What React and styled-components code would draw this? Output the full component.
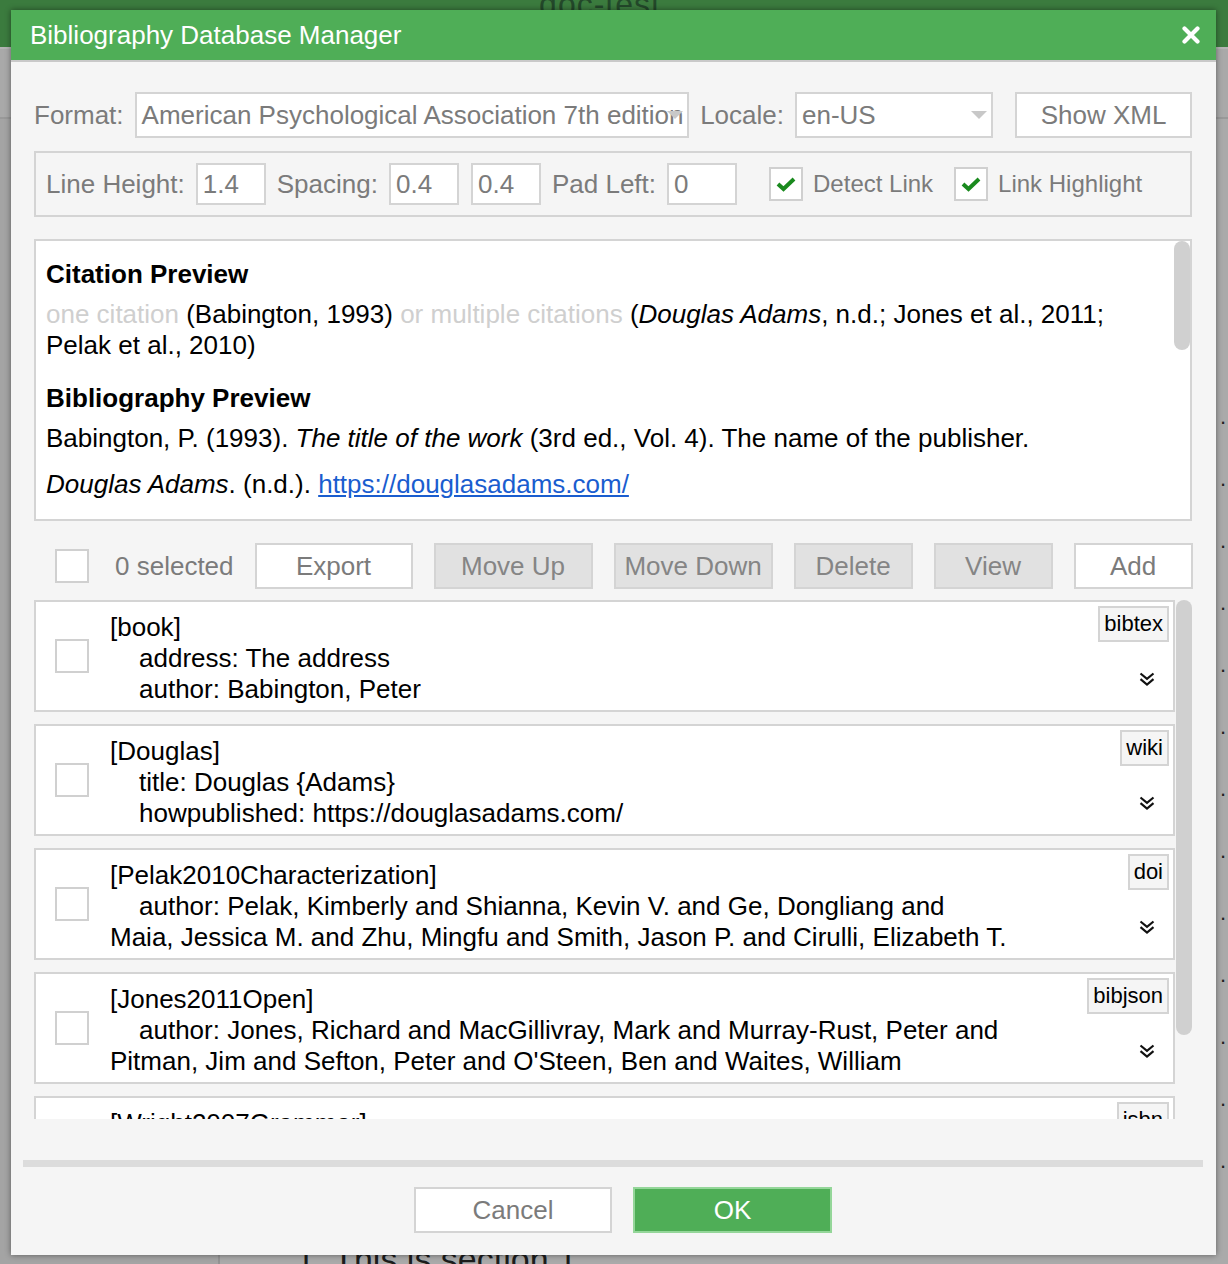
import React from 'react'
import styled, { createGlobalStyle, css } from 'styled-components'

const GlobalStyle = createGlobalStyle`
  html, body {
    margin: 0;
    padding: 0;
  }
  body {
    font-family: "Liberation Sans", Arial, Helvetica, sans-serif;
    background: #a6a6a6;
  }
  * {
    box-sizing: border-box;
  }
`

const entries = [
	{
		key: 'book',
		badge: 'bibtex',
		fields: ['address: The address', 'author: Babington, Peter'],
	},
	{
		key: 'Douglas',
		badge: 'wiki',
		fields: ['title: Douglas {Adams}', 'howpublished: https://douglasadams.com/'],
	},
	{
		key: 'Pelak2010Characterization',
		badge: 'doi',
		fields: [
			[
				'author: Pelak, Kimberly and Shianna, Kevin V. and Ge, Dongliang and',
				'Maia, Jessica M. and Zhu, Mingfu and Smith, Jason P. and Cirulli, Elizabeth T.',
			],
		],
	},
	{
		key: 'Jones2011Open',
		badge: 'bibjson',
		fields: [
			[
				'author: Jones, Richard and MacGillivray, Mark and Murray-Rust, Peter and',
				"Pitman, Jim and Sefton, Peter and O'Steen, Ben and Waites, William",
			],
		],
	},
	{
		key: 'Wright2007Grammar',
		badge: 'isbn',
		fields: ['author: Wright, Stephen', 'title: Grammar'],
	},
]

export default function App() {
	return (
		<Page>
			<GlobalStyle />
			<AppBar>
				<AppTitle>doc-test</AppTitle>
			</AppBar>
			<AppToolbar />
			<Workspace>
				<Sidebar />
				<Document>
					<Toc>
						{Array.from({ length: 13 }).map((_, i) => (
							<TocRow key={i}>. . .</TocRow>
						))}
					</Toc>
					<DocHeading>1. This is section 1</DocHeading>
				</Document>
			</Workspace>

			<Modal>
				<TitleBar>
					<span>Bibliography Database Manager</span>
					<CloseButton aria-label='close'>
						<svg width='18' height='18' viewBox='0 0 18 18'>
							<path
								d='M2.5 2.5 L15.5 15.5 M15.5 2.5 L2.5 15.5'
								stroke='#fff'
								strokeWidth='4.2'
								strokeLinecap='round'
							/>
						</svg>
					</CloseButton>
				</TitleBar>

				<Body>
					<FormatRow>
						<Label>Format:</Label>
						<Select grow>
							<SelectText>American Psychological Association 7th edition</SelectText>
							<Arrow />
						</Select>
						<Label lead>Locale:</Label>
						<Select width={198}>
							<SelectText>en-US</SelectText>
							<Arrow />
						</Select>
						<Button wide={177} spaced>
							Show XML
						</Button>
					</FormatRow>

					<OptionsBox>
						<Label>Line Height:</Label>
						<Input defaultValue='1.4' />
						<Label lead>Spacing:</Label>
						<Input defaultValue='0.4' />
						<Input defaultValue='0.4' />
						<Label lead>Pad Left:</Label>
						<Input defaultValue='0' />
						<Check checked gap={32} />
						<CheckLabel>Detect Link</CheckLabel>
						<Check checked gap={10} />
						<CheckLabel>Link Highlight</CheckLabel>
					</OptionsBox>

					<Preview>
						<PreviewContent>
							<PreviewTitle>Citation Preview</PreviewTitle>
							<CitationText>
								<Muted>one citation</Muted> (Babington, 1993){' '}
								<Muted>or multiple citations</Muted> (<i>Douglas Adams</i>, n.d.;
								Jones et al., 2011; Pelak et al., 2010)
							</CitationText>
							<PreviewTitle>Bibliography Preview</PreviewTitle>
							<BibEntry>
								Babington, P. (1993). <i>The title of the work</i> (3rd ed., Vol.
								4). The name of the publisher.
							</BibEntry>
							<BibEntry>
								<i>Douglas Adams</i>. (n.d.).{' '}
								<Link href='#'>https://douglasadams.com/</Link>
							</BibEntry>
							<BibEntry>
								Jones, R., MacGillivray, M., Murray-Rust, P., Pitman, J., Sefton,
								P., O’Steen, B., &amp; Waites, W. (2011). Open Bibliography for
								Science, Technology, and Medicine.{' '}
								<i>Journal of Cheminformatics</i>, <i>3</i>(1), 47.
							</BibEntry>
						</PreviewContent>
						<Track>
							<Thumb size={109} />
						</Track>
					</Preview>

					<Toolbar>
						<Check />
						<Count>0 selected</Count>
						<Button wide={158}>Export</Button>
						<Button wide={159} disabled>
							Move Up
						</Button>
						<Button wide={159} disabled>
							Move Down
						</Button>
						<Button wide={119} disabled>
							Delete
						</Button>
						<Button wide={119} disabled>
							View
						</Button>
						<Button wide={119}>Add</Button>
					</Toolbar>

					<ListArea>
						<EntryList>
							{entries.map((entry) => (
								<Entry key={entry.key}>
									<EntryCheck>
										<Check />
									</EntryCheck>
									<EntryText>
										<div>[{entry.key}]</div>
										{entry.fields.map((field, i) => (
											<Field key={i}>
												{Array.isArray(field) ? (
													<>
														{field[0]}
														<br />
														{field[1]}
													</>
												) : (
													field
												)}
											</Field>
										))}
									</EntryText>
									<EntrySide>
										<Badge>{entry.badge}</Badge>
										<Expand>
											<svg width='16' height='14' viewBox='0 0 16 14'>
												<path
													d='M1.5 1.5 L8 6.8 L14.5 1.5 M1.5 7.2 L8 12.5 L14.5 7.2'
													fill='none'
													stroke='#111'
													strokeWidth='2.2'
												/>
											</svg>
										</Expand>
									</EntrySide>
								</Entry>
							))}
						</EntryList>
						<Track>
							<Thumb size={435} />
						</Track>
					</ListArea>

					<Footer>
						<Button wide={198}>Cancel</Button>
						<Button wide={199} primary>
							OK
						</Button>
					</Footer>
				</Body>
			</Modal>
		</Page>
	)
}

function Check({ checked, gap }) {
	return (
		<CheckBox gap={gap}>
			{checked && (
				<svg width='22' height='16' viewBox='0 0 22 16'>
					<path
						d='M3 8 L8.5 13 L19 3'
						fill='none'
						stroke='#1a8a1e'
						strokeWidth='4'
					/>
				</svg>
			)}
		</CheckBox>
	)
}

/* ---------- background app ---------- */

const Page = styled.div`
	position: relative;
	width: 1228px;
	height: 1264px;
	overflow: hidden;
	background: #a6a6a6;
	display: flex;
	flex-direction: column;
`
const AppBar = styled.header`
	height: 47px;
	flex: none;
	background: #3b7b3e;
	display: flex;
	justify-content: center;
	padding-right: 28px;
	overflow: hidden;
`
const AppTitle = styled.div`
	margin-top: -14px;
	font-size: 32px;
	letter-spacing: 1px;
	color: #23482a;
`
const AppToolbar = styled.div`
	height: 72px;
	flex: none;
	background: #a9a9a9;
	border-top: 2px solid #b4b4b4;
	border-bottom: 2px solid #999;
`
const Workspace = styled.div`
	flex: 1;
	display: flex;
`
const Sidebar = styled.div`
	width: 220px;
	background: #a4a4a4;
	border-right: 2px solid #939393;
`
const Document = styled.div`
	flex: 1;
	background: #aaaaaa;
	display: flex;
	flex-direction: column;
	justify-content: space-between;
	padding: 285px 0 0 76px;
	overflow: hidden;
`
const Toc = styled.div`
	display: flex;
	flex-direction: column;
`
const TocRow = styled.div`
	height: 62px;
	text-align: right;
	font-size: 22px;
	letter-spacing: 2px;
	color: #222;
`
const DocHeading = styled.div`
	font-size: 34px;
	color: #1c1c1c;
	margin-bottom: -15px;
`

/* ---------- dialog ---------- */

const Modal = styled.div`
	position: absolute;
	top: 10px;
	left: 11px;
	width: 1205px;
	height: 1245px;
	background: #f5f5f5;
	box-shadow: 0 0 6px rgba(0, 0, 0, 0.45);
	display: flex;
	flex-direction: column;
	font-size: 26px;
`
const TitleBar = styled.div`
	height: 52px;
	flex: none;
	background: #4fae57;
	border-bottom: 2px solid #c9c9c9;
	display: flex;
	align-items: center;
	justify-content: space-between;
	padding: 0 16px 0 19px;
	color: #fff;
	font-size: 26px;
`
const CloseButton = styled.div`
	display: flex;
	width: 18px;
	height: 18px;
`
const Body = styled.div`
	flex: 1;
	display: flex;
	flex-direction: column;
	padding: 30px 24px 0 23px;
`
const Label = styled.span`
	font-size: 26px;
	color: #7b7b7b;
	white-space: nowrap;
	margin-left: ${(p) => (p.lead ? '11px' : '0')};
	margin-right: 11px;
`
const CheckLabel = styled.span`
	font-size: 24px;
	color: #7b7b7b;
	white-space: nowrap;
	margin-right: 11px;
`
const FormatRow = styled.div`
	height: 46px;
	display: flex;
	align-items: center;
	margin-bottom: 13px;
`
const Select = styled.div`
	position: relative;
	height: 46px;
	background: #fff;
	border: 2px solid #d4d4d4;
	display: flex;
	align-items: center;
	padding: 0 0 0 5px;
	overflow: hidden;
	${(p) =>
		p.grow
			? css`
					flex: 1;
					min-width: 0;
			  `
			: css`
					width: ${p.width}px;
					flex: none;
			  `}
`
const SelectText = styled.span`
	font-size: 26px;
	color: #7b7b7b;
	white-space: nowrap;
`
const Arrow = styled.span`
	position: absolute;
	right: 4px;
	top: 17px;
	width: 0;
	height: 0;
	border-left: 8px solid transparent;
	border-right: 8px solid transparent;
	border-top: 8px solid #c8c8c8;
`
const Button = styled.button`
	flex: none;
	width: ${(p) => p.wide}px;
	height: 46px;
	margin-left: ${(p) => (p.spaced ? '22px' : '0')};
	font-family: inherit;
	font-size: 26px;
	color: #7b7b7b;
	background: #fff;
	border: 2px solid #d4d4d4;
	padding: 0;
	cursor: pointer;

	&:disabled {
		background: #e1e1e1;
		color: #858585;
		cursor: default;
	}

	${(p) =>
		p.primary &&
		css`
			background: #4fae57;
			border-color: #94d699;
			color: #fff;
		`}
`
const OptionsBox = styled.div`
	height: 66px;
	border: 2px solid #d4d4d4;
	display: flex;
	align-items: center;
	padding: 0 10px;
	margin-bottom: 22px;
`
const Input = styled.input`
	width: 70px;
	height: 42px;
	flex: none;
	border: 2px solid #d4d4d4;
	background: #fff;
	font-family: inherit;
	font-size: 26px;
	color: #7b7b7b;
	padding: 0 5px;
	outline: none;

	& + & {
		margin-left: 12px;
	}
`
const CheckBox = styled.span`
	width: 34px;
	height: 34px;
	flex: none;
	display: flex;
	align-items: center;
	justify-content: center;
	background: #fff;
	border: 2px solid #d0d0d0;
	margin-left: ${(p) => (p.gap ? p.gap : 0)}px;
	margin-right: ${(p) => (p.gap ? 10 : 0)}px;
`
const Track = styled.div`
	width: 16px;
	flex: none;
`
const Thumb = styled.div`
	height: ${(p) => p.size}px;
	background: #d0d0d0;
	border-radius: 8px;
`
const Preview = styled.div`
	height: 282px;
	flex: none;
	display: flex;
	border: 2px solid #d4d4d4;
	background: #fff;
	margin-bottom: 22px;
	overflow: hidden;
`
const PreviewContent = styled.div`
	flex: 1;
	min-width: 0;
	padding: 18px 20px 0 10px;
	color: #000;
	line-height: 31px;
`
const PreviewTitle = styled.div`
	font-weight: bold;
	margin-bottom: 9px;
`
const CitationText = styled.div`
	margin-bottom: 22px;
`
const Muted = styled.span`
	color: #cfcfcf;
`
const BibEntry = styled.div`
	margin-top: 5px;
	margin-bottom: 15px;
`
const Link = styled.a`
	color: #1a5dcf;
	text-decoration: underline;
`
const Toolbar = styled.div`
	height: 46px;
	flex: none;
	display: flex;
	align-items: center;
	gap: 21px;
	padding-left: 21px;
	margin-bottom: 11px;
`
const Count = styled.span`
	flex: 1;
	white-space: nowrap;
	color: #7b7b7b;
	margin-left: 5px;
`
const ListArea = styled.div`
	height: 519px;
	flex: none;
	display: flex;
	gap: 1px;
`
const EntryList = styled.div`
	flex: 1;
	min-width: 0;
	overflow: hidden;
`
const Entry = styled.div`
	display: flex;
	background: #fff;
	border: 2px solid #d4d4d4;
	margin-bottom: 12px;
`
const EntryCheck = styled.div`
	display: flex;
	align-items: center;
	padding: 0 21px 0 19px;
`
const EntryText = styled.div`
	flex: 1;
	padding: 10px 0 5px;
	line-height: 31px;
	color: #000;
	white-space: nowrap;
`
const Field = styled.div`
	text-indent: 29px;
`
const EntrySide = styled.div`
	display: flex;
	flex-direction: column;
	align-items: flex-end;
	justify-content: space-between;
	padding: 4px 4px 24px;
`
const Badge = styled.span`
	height: 36px;
	line-height: 32px;
	padding: 0 4px;
	background: #f5f5f5;
	border: 2px solid #d4d4d4;
	font-size: 22px;
	color: #000;
`
const Expand = styled.span`
	display: flex;
	margin-right: 14px;
`
const Footer = styled.div`
	margin: 41px -11px 0;
	border-top: 7px solid #dcdcdc;
	padding: 20px 0 0 20px;
	display: flex;
	justify-content: center;
	gap: 21px;
`
